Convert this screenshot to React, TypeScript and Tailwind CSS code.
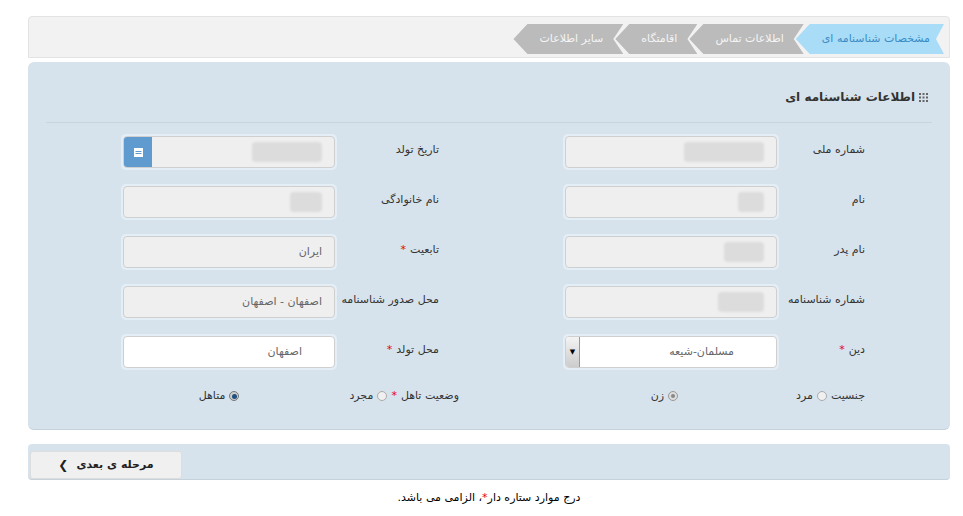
import React from "react";

const Blur = ({ w }: { w: string }) => <div className={`h-[20px] ${w} bg-[#dcdcdc] rounded-sm blur-[1px]`} />;

function Field({ label, star, children, white, left, lw }: { label: string; star?: boolean; children?: React.ReactNode; white?: boolean; left?: React.ReactNode; lw: string }) {
  return (
    <div className="flex items-start">
      <div className={`${lw} shrink-0 pt-[8px] text-[11px] text-[#333] whitespace-nowrap`}>
        {label}
        {star && <span className="text-red-600 mr-1">*</span>}
      </div>
      <div className="w-[216px] h-[36px] rounded-[5px] p-[2px] bg-[#e4eef6] shrink-0">
        <div className={`h-full rounded-[4px] border border-[#cfcfcf] ${white ? "bg-white" : "bg-[#efefef]"} flex items-center overflow-hidden`}>
          <div className="flex-1 flex items-center px-3 text-[11px] text-[#666]">{children}</div>
          {left}
        </div>
      </div>
    </div>
  );
}

const R = ({ children }: { children: React.ReactNode }) => <div className="pr-[67px]">{children}</div>;
const L = ({ children }: { children: React.ReactNode }) => <div className="pr-[50px]">{children}</div>;

export default function App() {
  const tabs = [
    { t: "مشخصات شناسنامه ای", a: true },
    { t: "اطلاعات تماس" },
    { t: "اقامتگاه" },
    { t: "سایر اطلاعات" },
  ];
  return (
    <div dir="rtl" className="w-[963px] h-[516px] bg-white pt-[16px] px-[13px]" style={{ fontFamily: '"DejaVu Sans", sans-serif' }}>
      <div className="ml-[15px] h-[42px] bg-[#f2f2f2] border border-[#e3e3e3] rounded-t-[4px] flex items-center pt-[4px]">
        <div className="flex h-[30px] mr-[5px]">
          {tabs.map((x, i) => (
            <div key={i} className={`h-full flex items-center -ml-[8px] text-[11px] ${x.a ? "bg-[#a9dcf7] text-[#3b8dc5] pr-[14px] pl-[26px] [clip-path:polygon(100%_0,calc(100%-8px)_50%,100%_100%,14px_100%,0_50%,14px_0)]" : "bg-[#bbbbbb] text-[#f4f4f4] pr-[20px] pl-[26px] [clip-path:polygon(100%_0,calc(100%-10px)_50%,100%_100%,14px_100%,0_50%,14px_0)]"}`}>
              {x.t}
            </div>
          ))}
        </div>
      </div>
      <div className="mt-[4px] ml-[15px] h-[368px] bg-[#d7e3ec] rounded-[6px] border-b border-[#c5d1db] pt-[26px] px-[18px]">
        <div className="flex items-center gap-1 text-[12px] font-bold text-[#333] pr-[4px]">
          <svg width="9" height="9" viewBox="0 0 9 9" fill="#666"><rect x="0" y="0" width="2" height="2"/><rect x="3.5" y="0" width="2" height="2"/><rect x="7" y="0" width="2" height="2"/><rect x="0" y="3.5" width="2" height="2"/><rect x="3.5" y="3.5" width="2" height="2"/><rect x="7" y="3.5" width="2" height="2"/><rect x="0" y="7" width="2" height="2"/><rect x="3.5" y="7" width="2" height="2"/><rect x="7" y="7" width="2" height="2"/></svg>
          <span>اطلاعات شناسنامه ای</span>
        </div>
        <div className="mt-[16px] h-px bg-[#c8d4de]" />
        <div className="grid grid-cols-2 gap-y-[14px] mt-[11px]">
          <R><Field lw="w-[86px]" label="شماره ملی"><Blur w="w-[80px]" /></Field></R>
          <L><Field lw="w-[102px]" label="تاریخ تولد" left={<div className="w-[28px] h-full bg-[#5f9bcf] flex items-center justify-center"><svg width="9" height="10" viewBox="0 0 9 10" fill="#fff"><rect x="0" y="1" width="9" height="9"/><rect x="1.5" y="4" width="6" height="1" fill="#5f9bcf"/><rect x="1.5" y="6" width="6" height="1" fill="#5f9bcf"/></svg></div>}><Blur w="w-[70px]" /></Field></L>
          <R><Field lw="w-[86px]" label="نام"><Blur w="w-[26px]" /></Field></R>
          <L><Field lw="w-[102px]" label="نام خانوادگی"><Blur w="w-[32px]" /></Field></L>
          <R><Field lw="w-[86px]" label="نام پدر"><Blur w="w-[40px]" /></Field></R>
          <L><Field lw="w-[102px]" label="تابعیت" star>ایران</Field></L>
          <R><Field lw="w-[86px]" label="شماره شناسنامه"><Blur w="w-[46px]" /></Field></R>
          <L><Field lw="w-[102px]" label="محل صدور شناسنامه" star>اصفهان - اصفهان</Field></L>
          <R><Field lw="w-[86px]" label="دین" star white left={<div className="w-[14px] h-full border-r border-[#999] bg-gradient-to-b from-[#f4f4f4] to-[#ccc] flex items-center justify-center text-[7px] text-black">▼</div>}><span className="pr-[30px]">مسلمان-شیعه</span></Field></R>
          <L><Field lw="w-[102px]" label="محل تولد" star white><span className="pr-[20px]">اصفهان</span></Field></L>
        </div>
        <div className="grid grid-cols-2 mt-[18px] text-[11px] text-[#333]">
          <div className="flex items-center pr-[67px]">
            <span>جنسیت</span>
            <span className="w-[10px] h-[10px] rounded-full border border-[#aaa] bg-[#f0f0f0] mr-1 ml-1" />
            <span>مرد</span>
            <span className="mr-[118px] w-[10px] h-[10px] rounded-full border border-[#999] bg-[#ddd] flex items-center justify-center ml-1"><span className="w-[4px] h-[4px] rounded-full bg-[#888]" /></span>
            <span>زن</span>
          </div>
          <div className="flex items-center pr-[30px]">
            <span>وضعیت تاهل</span><span className="text-red-600 mr-1">*</span>
            <span className="w-[10px] h-[10px] rounded-full border border-[#aaa] bg-[#f0f0f0] mr-1 ml-1" />
            <span>مجرد</span>
            <span className="mr-[110px] w-[10px] h-[10px] rounded-full border border-[#777] bg-[#ccc] flex items-center justify-center ml-1"><span className="w-[5px] h-[5px] rounded-full bg-[#1f4f7f]" /></span>
            <span>متاهل</span>
          </div>
        </div>
      </div>
      <div className="mt-[14px] ml-[15px] h-[36px] bg-[#d7e3ec] rounded-[4px] border-b border-[#c5d1db] flex justify-end items-start">
        <div className="mt-[7px] ml-[2px] w-[152px] h-[28px] bg-[#f0f0f0] border border-[#ddd] rounded-[3px] flex items-center justify-center gap-2 text-[11px] font-bold text-[#222]">
          <span>مرحله ی بعدی</span><span className="text-[12px]">❯</span>
        </div>
      </div>
      <div className="mt-[10px] text-center text-[11px] text-black pl-[15px]">
        درج موارد ستاره دار<span className="text-red-600">*</span>، الزامی می باشد.
      </div>
    </div>
  );
}
